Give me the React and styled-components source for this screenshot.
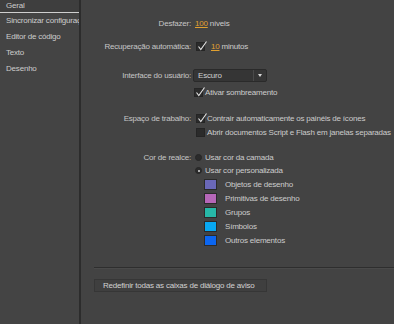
import styled, { createGlobalStyle } from 'styled-components';

const GlobalStyle = createGlobalStyle`
  html, body {
    margin: 0;
    padding: 0;
    background: #434343;
  }
  body {
    font-family: 'Liberation Sans', Arial, sans-serif;
    font-size: 8px;
    letter-spacing: -0.2px;
    color: #cccccc;
  }
`;

const Window = styled.div`
  display: flex;
  width: 394px;
  height: 324px;
  overflow: hidden;
  background: #434343;
`;

const Sidebar = styled.ul`
  list-style: none;
  margin: 0;
  padding: 0;
  width: 79px;
  flex: none;
  border-right: 2px solid #2c2c2c;
  background: #444444;
  overflow: hidden;
`;

const NavItem = styled.li`
  height: ${(p) => (p.$active ? '12px' : '16px')};
  line-height: ${(p) => (p.$active ? '11px' : '16px')};
  padding-left: 6px;
  white-space: nowrap;
  color: #cccccc;
  background: ${(p) => (p.$active ? '#3e3e3e' : 'transparent')};
  border-bottom: ${(p) => (p.$active ? '1px solid #cfcfcf' : 'none')};
`;

const Main = styled.div`
  flex: 1;
  display: flex;
  flex-direction: column;
  padding-top: 17px;
  overflow: hidden;
`;

const Row = styled.div`
  display: grid;
  grid-template-columns: 110px 1fr;
  column-gap: 3px;
  align-items: center;
  height: ${(p) => p.$h || 13}px;
  margin-top: ${(p) => p.$mt || 0}px;
  white-space: nowrap;
`;

const Label = styled.span`
  text-align: right;
  color: #c6c6c6;
`;

const Controls = styled.div`
  display: flex;
  align-items: center;
  gap: ${(p) => p.$gap ?? 2}px;
  padding-left: ${(p) => p.$indent || 0}px;
`;

const Value = styled.span`
  color: #e0a030;
  text-decoration: underline;
  text-underline-offset: 1px;
  margin: 0 2px 0 1px;
`;

const Box = styled.span`
  position: relative;
  width: 9px;
  height: 9px;
  flex: none;
  background: #2b2b2b;
  border: 1px solid #252525;
  box-sizing: border-box;
  margin-left: ${(p) => p.$ml || 0}px;
  margin-right: ${(p) => p.$mr || 0}px;
`;

const Tick = styled.svg`
  position: absolute;
  left: 0;
  top: -2px;
  width: 10px;
  height: 10px;
  overflow: visible;
`;

const Radio = styled.span`
  position: relative;
  width: 7px;
  height: 7px;
  flex: none;
  border-radius: 50%;
  background: #2b2b2b;
  border: 1px solid #262626;
  box-sizing: border-box;
  margin: 0 3px 0 1px;

  &::after {
    content: '';
    display: ${(p) => (p.$checked ? 'block' : 'none')};
    position: absolute;
    left: 1.5px;
    top: 1.5px;
    width: 2px;
    height: 2px;
    border-radius: 50%;
    background: #d8d8d8;
  }
`;

const Select = styled.div`
  display: flex;
  align-items: center;
  width: 74px;
  height: 13px;
  box-sizing: border-box;
  background: #353535;
  border: 1px solid #2a2a2a;
  border-radius: 2px;
  margin-left: -1px;
`;

const SelectText = styled.span`
  flex: 1;
  padding-left: 4px;
  color: #d0d0d0;
`;

const SelectArrow = styled.span`
  width: 12px;
  height: 11px;
  border-left: 1px solid #4a4a4a;
  display: flex;
  align-items: center;
  justify-content: center;

  &::after {
    content: '';
    border-left: 2.5px solid transparent;
    border-right: 2.5px solid transparent;
    border-top: 3px solid #d6d6d6;
  }
`;

const Swatch = styled.span`
  width: 13px;
  height: 11px;
  flex: none;
  box-sizing: border-box;
  border: 1px solid #2a2a2a;
  background: ${(p) => p.$color};
  margin-right: 8px;
`;

const Footer = styled.div`
  margin: 20px 0 0 13px;
`;

const Divider = styled.div`
  height: 1px;
  background: #2e2e2e;
  border-bottom: 1px solid #4a4a4a;
`;

const Button = styled.button`
  display: block;
  margin-top: 10px;
  width: 173px;
  height: 13px;
  padding: 0 0 0 8px;
  text-align: left;
  font: inherit;
  letter-spacing: inherit;
  color: #d2d2d2;
  background: #3f3f3f;
  border: 1px solid #363636;
  white-space: nowrap;
`;

function Check({ checked, ml, mr }) {
  return (
    <Box $ml={ml} $mr={mr}>
      {checked && (
        <Tick viewBox="0 0 10 10">
          <polyline
            points="1.5,5.5 3.8,8.5 9.5,0.5"
            fill="none"
            stroke="#e2e2e2"
            strokeWidth="1.1"
          />
        </Tick>
      )}
    </Box>
  );
}

const navItems = ['Geral', 'Sincronizar configurações', 'Editor de código', 'Texto', 'Desenho'];

const swatches = [
  { color: '#6a68b8', name: 'Objetos de desenho' },
  { color: '#b667b8', name: 'Primitivas de desenho' },
  { color: '#27b8a8', name: 'Grupos' },
  { color: '#08a8f2', name: 'Símbolos' },
  { color: '#0c66f0', name: 'Outros elementos' },
];

export default function App() {
  return (
    <>
      <GlobalStyle />
      <Window>
        <Sidebar>
          {navItems.map((item, i) => (
            <NavItem key={item} $active={i === 0}>
              {item}
            </NavItem>
          ))}
        </Sidebar>
        <Main>
          <Row>
            <Label>Desfazer:</Label>
            <Controls $gap={0}>
              <Value>100</Value>
              níveis
            </Controls>
          </Row>
          <Row $mt={10}>
            <Label>Recuperação automática:</Label>
            <Controls $gap={0}>
              <Check checked ml={2} mr={5} />
              <Value>10</Value>
              minutos
            </Controls>
          </Row>
          <Row $mt={16}>
            <Label>Interface do usuário:</Label>
            <Controls>
              <Select>
                <SelectText>Escuro</SelectText>
                <SelectArrow />
              </Select>
            </Controls>
          </Row>
          <Row $mt={4}>
            <span />
            <Controls>
              <Check checked />
              Ativar sombreamento
            </Controls>
          </Row>
          <Row $mt={13}>
            <Label>Espaço de trabalho:</Label>
            <Controls>
              <Check checked ml={2} />
              Contrair automaticamente os painéis de ícones
            </Controls>
          </Row>
          <Row $mt={1}>
            <span />
            <Controls>
              <Check ml={2} />
              Abrir documentos Script e Flash em janelas separadas
            </Controls>
          </Row>
          <Row $mt={12}>
            <Label>Cor de realce:</Label>
            <Controls $gap={0}>
              <Radio />
              Usar cor da camada
            </Controls>
          </Row>
          <Row>
            <span />
            <Controls $gap={0}>
              <Radio $checked />
              Usar cor personalizada
            </Controls>
          </Row>
          {swatches.map((s) => (
            <Row key={s.name} $h={14}>
              <span />
              <Controls $gap={0} $indent={10}>
                <Swatch $color={s.color} />
                {s.name}
              </Controls>
            </Row>
          ))}
          <Footer>
            <Divider />
            <Button>Redefinir todas as caixas de diálogo de aviso</Button>
          </Footer>
        </Main>
      </Window>
    </>
  );
}
